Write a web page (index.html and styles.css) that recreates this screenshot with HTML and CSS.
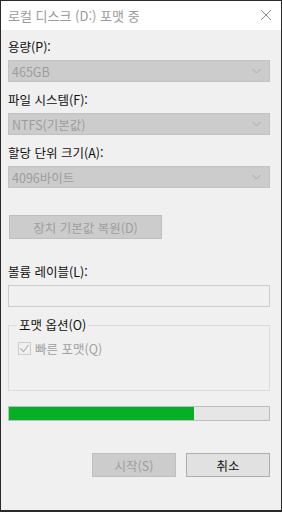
FILE: index.html
```html
<!DOCTYPE html>
<html lang="ko">
<head>
    <meta charset="UTF-8">
    <meta name="viewport" content="width=device-width, initial-scale=1.0">
    <title>로컬 디스크 (D:) 포맷 중</title>
    <link rel="stylesheet" href="styles.css">
</head>
<body>
    <div class="window">
        <div class="titlebar">
            <span class="title">로컬 디스크 (D:) 포맷 중</span>
            <svg class="close" width="12" height="12" viewBox="0 0 12 12">
                <path d="M1 1 L11 11 M11 1 L1 11" stroke="#8a8a8a" stroke-width="1" fill="none"/>
            </svg>
        </div>

        <div class="content">
            <div class="field">
                <label>용량(P):</label>
                <div class="combo"><span>465GB</span>
                    <svg width="9" height="6" viewBox="0 0 9 6"><path d="M0.5 1 L4.5 5 L8.5 1" stroke="#aaa" fill="none"/></svg>
                </div>
            </div>

            <div class="field">
                <label>파일 시스템(F):</label>
                <div class="combo"><span>NTFS(기본값)</span>
                    <svg width="9" height="6" viewBox="0 0 9 6"><path d="M0.5 1 L4.5 5 L8.5 1" stroke="#aaa" fill="none"/></svg>
                </div>
            </div>

            <div class="field">
                <label>할당 단위 크기(A):</label>
                <div class="combo"><span>4096바이트</span>
                    <svg width="9" height="6" viewBox="0 0 9 6"><path d="M0.5 1 L4.5 5 L8.5 1" stroke="#aaa" fill="none"/></svg>
                </div>
            </div>

            <div class="btn btn-reset disabled">장치 기본값 복원(D)</div>

            <div class="field label-field">
                <label>볼륨 레이블(L):</label>
                <div class="textbox"></div>
            </div>

            <fieldset class="group">
                <legend>포맷 옵션(O)</legend>
                <div class="check">
                    <span class="box">
                        <svg width="11" height="11" viewBox="0 0 11 11"><path d="M1.5 5.5 L4.5 8.5 L9.5 2" stroke="#b5b5b5" stroke-width="1.2" fill="none"/></svg>
                    </span>
                    <span class="check-text">빠른 포맷(Q)</span>
                </div>
            </fieldset>

            <div class="progress"><div class="bar" style="width: 71%"></div></div>

            <div class="actions">
                <div class="btn disabled">시작(S)</div>
                <div class="btn">취소</div>
            </div>
        </div>
    </div>
</body>
</html>
```

FILE: styles.css
```css
body {
    margin: 0;
    padding: 0;
    font-family: 'Noto Sans CJK KR', 'Noto Sans', sans-serif;
    font-size: 12.5px;
    color: #111;
    background: #f0f0f0;
}

.window {
    box-sizing: border-box;
    width: 282px;
    height: 512px;
    border: 1px solid #2a2a2a;
    border-bottom-width: 2px;
    background: #f0f0f0;
    display: flex;
    flex-direction: column;
}

.titlebar {
    height: 29px;
    background: #ffffff;
    display: flex;
    align-items: center;
    justify-content: space-between;
    padding: 0 9px 0 7px;
}

.title {
    color: #9a9a9a;
    font-size: 13px;
}

.close {
    margin-bottom: 2px;
}

.content {
    padding: 8px 11px 0 7px;
}

.field {
    display: flex;
    flex-direction: column;
    gap: 5px;
    margin-bottom: 9px;
}

.field label {
    line-height: 17px;
    height: 17px;
}

.combo {
    box-sizing: border-box;
    height: 22px;
    background: #cccccc;
    border: 1px solid #c2c2c2;
    display: flex;
    align-items: center;
    justify-content: space-between;
    padding: 0 8px 0 3px;
    color: #9d9d9d;
}

.btn {
    box-sizing: border-box;
    height: 24px;
    width: 84px;
    display: flex;
    align-items: center;
    justify-content: center;
    background: #e1e1e1;
    border: 1px solid #adadad;
    color: #111;
}

.btn.disabled {
    background: #cccccc;
    border-color: #bfbfbf;
    color: #9d9d9d;
}

.btn-reset {
    width: 153px;
    margin: 27px 0 0 1px;
}

.label-field {
    margin-top: 24px;
}

.textbox {
    box-sizing: border-box;
    height: 22px;
    border: 1px solid #cccccc;
    background: #f0f0f0;
}

.group {
    margin: 10px 0 0 0;
    padding: 6px 10px 0 9px;
    height: 66px;
    border: 1px solid #dcdcdc;
}

.group legend {
    padding: 0 2px;
    margin-left: -1px;
    line-height: 16px;
}

.check {
    display: flex;
    align-items: center;
    gap: 4px;
    color: #a0a0a0;
}

.box {
    box-sizing: border-box;
    width: 13px;
    height: 13px;
    border: 1px solid #cccccc;
    background: #f0f0f0;
    display: flex;
    align-items: center;
    justify-content: center;
}

.progress {
    box-sizing: border-box;
    height: 15px;
    margin-top: 15px;
    border: 1px solid #bcbcbc;
    background: #e6e6e6;
}

.progress .bar {
    height: 100%;
    background: #06b025;
}

.actions {
    display: flex;
    justify-content: flex-end;
    gap: 10px;
    margin-top: 32px;
}
```
